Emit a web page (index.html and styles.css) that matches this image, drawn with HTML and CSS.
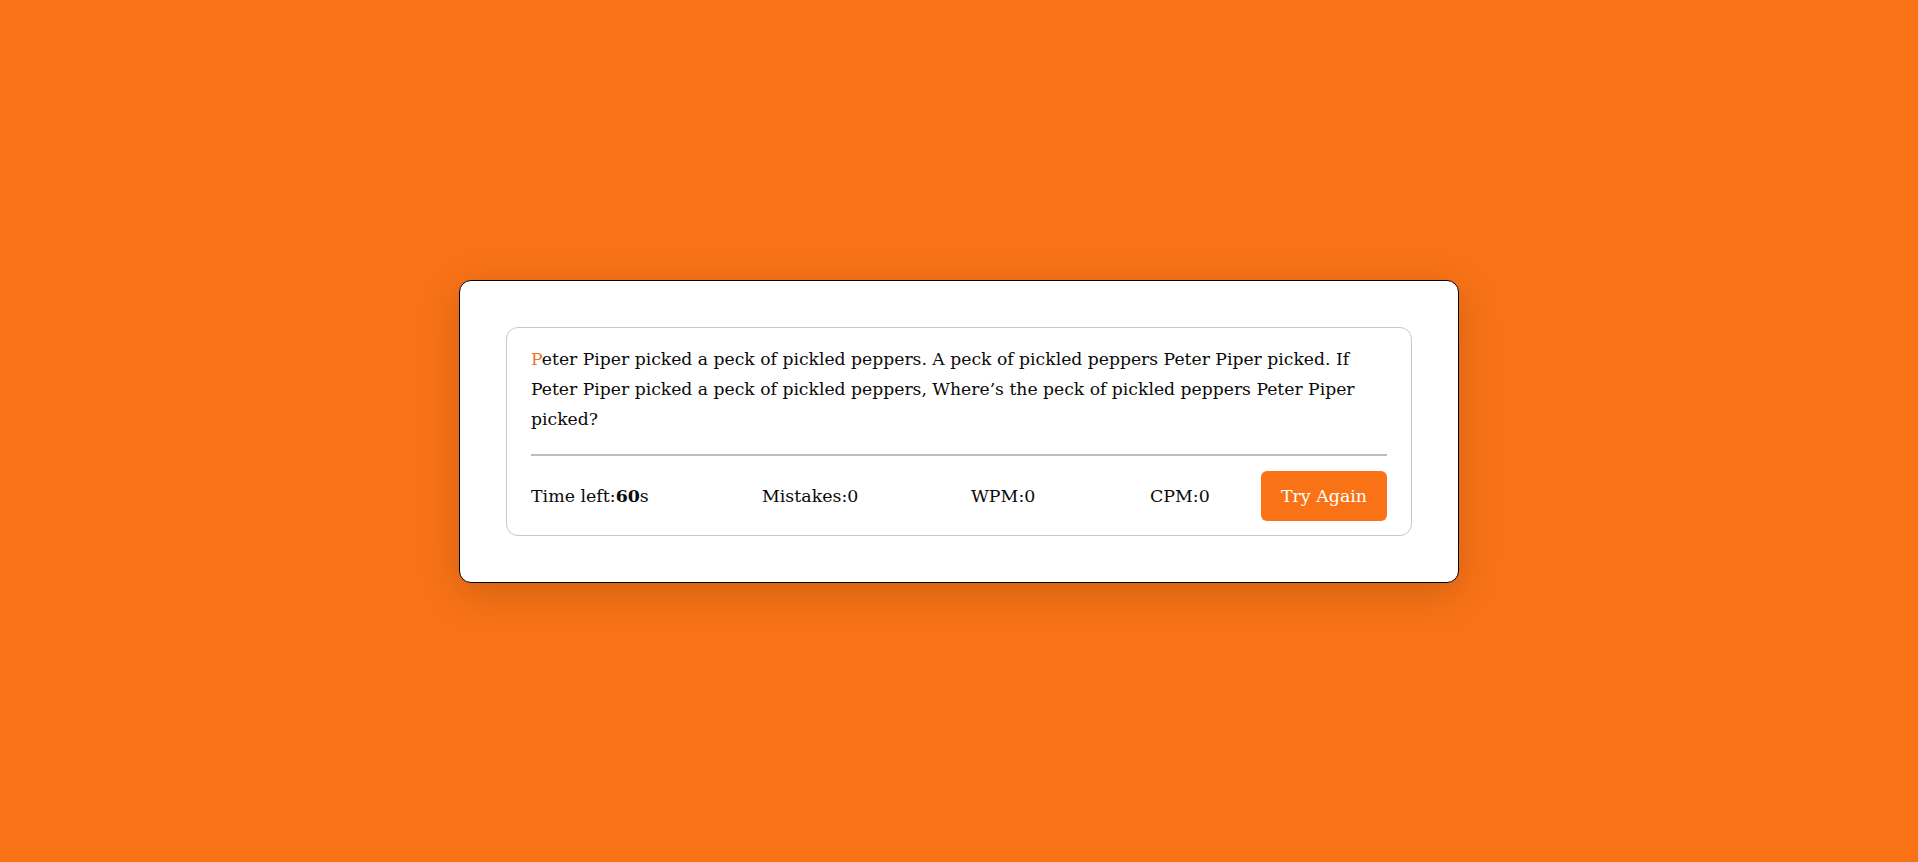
FILE: index.html
```html
<!DOCTYPE html>
<html lang="en">
<head>
<meta charset="utf-8">
<title>Typing Test</title>
<link rel="stylesheet" href="styles.css">
</head>
<body>
<div class="wrapper">
  <div class="content-box">
    <div class="typing-text">
      <p><span class="active">P</span>eter Piper picked a peck of pickled peppers. A peck of pickled peppers Peter Piper picked. If Peter Piper picked a peck of pickled peppers, Where’s the peck of pickled peppers Peter Piper picked?</p>
    </div>
    <div class="content">
      <ul class="result-details">
        <li class="time">Time left:<b>60</b>s</li>
        <li class="mistake">Mistakes:0</li>
        <li class="wpm">WPM:0</li>
        <li class="cpm">CPM:0</li>
      </ul>
      <button class="try-btn">Try Again</button>
    </div>
  </div>
</div>
</body>
</html>
```
FILE: styles.css
```css
* {
  margin: 0;
  padding: 0;
  box-sizing: border-box;
}
body {
  display: flex;
  align-items: center;
  justify-content: center;
  min-height: 100vh;
  background: #f97316;
  font-family: "DejaVu Serif", Georgia, serif;
  color: #0a0a0a;
}
.wrapper {
  width: 1000px;
  padding: 46px;
  background: #fff;
  border: 1px solid #000;
  border-radius: 12px;
  box-shadow: 0 10px 40px rgba(0, 0, 0, 0.17);
}
.content-box {
  border: 1px solid #c8c8c8;
  border-radius: 12px;
  padding: 16px 24px 14px;
}
.typing-text p {
  font-size: 17.2px;
  line-height: 30px;
}
.typing-text .active {
  color: #f0762a;
}
.content {
  margin-top: 20px;
  border-top: 2px solid #bdbdbd;
  padding-top: 15px;
  display: flex;
  align-items: center;
}
.result-details {
  display: flex;
  list-style: none;
  align-items: center;
  font-size: 17.4px;
}
.result-details .time { width: 231px; }
.result-details .mistake { width: 209px; }
.result-details .wpm { width: 179px; }
.try-btn {
  margin-left: auto;
  width: 126px;
  height: 50px;
  border: none;
  border-radius: 6px;
  background: #f97316;
  color: #fff;
  font-family: "DejaVu Serif", Georgia, serif;
  font-size: 17.4px;
}
```
